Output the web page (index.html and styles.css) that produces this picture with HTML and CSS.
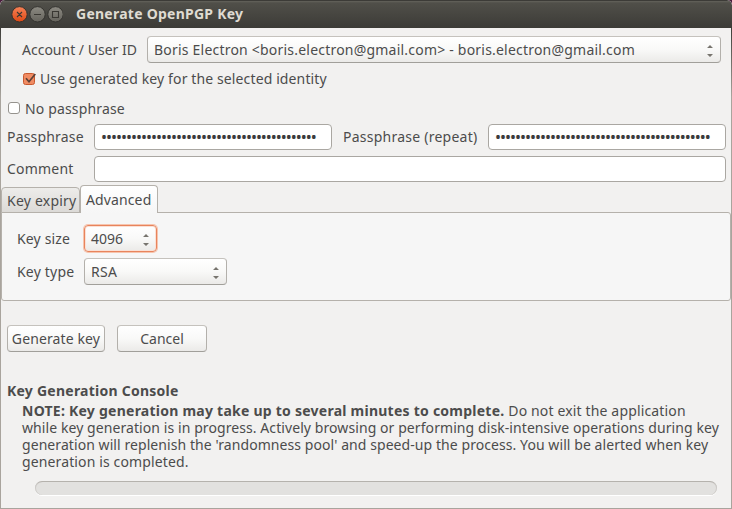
FILE: index.html
```
<!DOCTYPE html>
<html lang="en">
<head>
<meta charset="utf-8">
<title>Generate OpenPGP Key</title>
<link rel="stylesheet" href="styles.css">
</head>
<body>
<main class="window">
  <header class="titlebar">
    <svg class="controls" width="52" height="18" viewBox="0 0 52 18">
      <defs>
        <linearGradient id="close" x2="0" y2="1"><stop stop-color="#f68257"/><stop offset="1" stop-color="#dd4814"/></linearGradient>
        <linearGradient id="plain" x2="0" y2="1"><stop stop-color="#8c8a82"/><stop offset="1" stop-color="#65635c"/></linearGradient>
      </defs>
      <g stroke="#33322e">
        <circle cx="8.5" cy="9.3" r="7.7" fill="url(#close)"/>
        <circle cx="26.5" cy="9.3" r="7.7" fill="url(#plain)"/>
        <circle cx="44.5" cy="9.3" r="7.7" fill="url(#plain)"/>
      </g>
      <g fill="none" stroke="#3a3833" stroke-width="1.1">
        <path d="M6 7l5 5M11 7l-5 5M23 9.5h7M41.5 6.5h6v6h-6z"/>
      </g>
    </svg>
    <h1 class="title t-title">Generate OpenPGP Key</h1>
  </header>
  <section class="content">
    <div class="account">
      <span class="t-account">Account / User ID</span>
      <div class="select select-account"><span class="t-identity">Boris Electron &lt;boris.electron@gmail.com&gt; - boris.electron@gmail.com</span><svg class="arrows" width="8" height="13" viewBox="0 0 8 13"><path d="M1 4L4 1l3 3zM1 10h6l-3 3z"/></svg></div>
    </div>
    <div class="check check-identity">
      <svg width="14" height="14" viewBox="0 0 14 14"><rect x=".5" y="1.5" width="11" height="11" rx="2" fill="#f08b62" stroke="#c8592f"/><path d="M3 6.3l3 3.4 6.3-7.7" fill="none" stroke="#5c4036" stroke-width="1.7"/></svg>
      <span class="t-use">Use generated key for the selected identity</span>
    </div>
    <div class="check check-none">
      <i class="box"></i>
      <span class="t-nopass">No passphrase</span>
    </div>
    <div class="fields">
      <span class="t-pass">Passphrase</span>
      <div class="input">•••••••••••••••••••••••••••••••••••••••••••</div>
      <span class="t-repeat">Passphrase (repeat)</span>
      <div class="input">•••••••••••••••••••••••••••••••••••••••••••</div>
      <span class="t-comment">Comment</span>
      <div class="input input-comment"></div>
    </div>
    <nav class="tabs">
      <div class="tab"><span class="t-expiry">Key expiry</span></div>
      <div class="tab active"><span class="t-advanced">Advanced</span></div>
    </nav>
    <div class="panel">
      <span class="t-size">Key size</span>
      <div class="select select-size"><span class="t-4096">4096</span><svg class="arrows" width="8" height="13" viewBox="0 0 8 13"><path d="M1 4L4 1l3 3zM1 10h6l-3 3z"/></svg></div>
      <span class="t-type">Key type</span>
      <div class="select select-type"><span class="t-rsa">RSA</span><svg class="arrows" width="8" height="13" viewBox="0 0 8 13"><path d="M1 4L4 1l3 3zM1 10h6l-3 3z"/></svg></div>
    </div>
    <div class="actions">
      <div class="button button-generate"><span class="t-generate">Generate key</span></div>
      <div class="button button-cancel"><span class="t-cancel">Cancel</span></div>
    </div>
    <h2 class="console"><span class="t-console">Key Generation Console</span></h2>
    <p class="note"><b class="t-note1">NOTE: Key generation may take up to several minutes to complete.</b><span class="t-note2"> Do not exit the application</span><br>
    <span class="t-note3">while key generation is in progress. Actively browsing or performing disk-intensive operations during key</span><br>
    <span class="t-note4">generation will replenish the 'randomness pool' and speed-up the process. You will be alerted when key</span><br>
    <span class="t-note5">generation is completed.</span></p>
    <div class="progress"></div>
  </section>
</main>
</body>
</html>
```
FILE: styles.css
```
* { box-sizing: border-box; }
body { margin: 0; background: #4a1c3c; }
.window {
  width: 732px; height: 509px; display: flex; flex-direction: column;
  background: #f2f1f0; color: #4c4c4c; border-radius: 5px 5px 0 0; overflow: hidden;
  font: 14px/17px "Noto Sans", sans-serif; white-space: nowrap;
}
.titlebar {
  height: 28px; display: flex; align-items: center; padding: 0 11px; gap: 13px;
  background: linear-gradient(#3c3b37 0, #3c3b37 1px, #64635c 1px, #504f49 3px, #3c3b37);
  border-radius: 5px 5px 0 0; color: #dfdbd2;
}
.title { margin: 0 0 2px; font-size: 14px; line-height: 17px; font-weight: 700; }
.content {
  flex: 1; display: flex; flex-direction: column;
  border: solid; border-width: 0 1px 1px;
  border-image: linear-gradient(#3c3b37, #a9a49d 70px) 1;
}
.account { display: flex; align-items: center; margin: 8px 10px 0 21px; justify-content: space-between; }
.select {
  display: flex; align-items: center; justify-content: space-between;
  height: 27px; padding: 0 6px; border: 1px solid; border-color: #c5c2bd #b3b0ab #a19f9a;
  border-radius: 4px; background: linear-gradient(#fff, #f9f9f8 50%, #ebeae8);
}
.select-account { width: 574px; }
.select-size {
  width: 73px; height: 27px; border: 1px solid #e8845c; padding: 0 6px;
  box-shadow: 0 0 0 1px #f6c4ae, inset 0 0 0 1px #fae0d5;
}
.select-type { width: 143px; }
.arrows { fill: #77746e; flex: none; margin-top: 2px; }
.check { display: flex; align-items: center; height: 17px; }
.check-identity { margin: 7px 0 0 22px; gap: 3px; }
.check-none { margin: 13px 0 0 7px; gap: 5px; }
.box { width: 12px; height: 12px; border: 1px solid #96938e; border-radius: 3px; background: #fff; margin-top: -1px; }
.fields {
  display: grid; grid-template-columns: 87px 238px 156px 238px; grid-template-rows: 27px 27px;
  row-gap: 5px; margin: 6px 0 0 6px; align-items: center;
}
.t-repeat { padding-left: 11px; }
.input {
  height: 26px; border: 1px solid #aaa7a2; border-radius: 4px; background: #fff;
  color: #3c3c3c; padding: 0 6px; font-size: 16px; line-height: 24px; overflow: hidden; letter-spacing: -1.02px;
}
.input-comment { grid-column: 2 / 5; }
.tabs { display: flex; align-items: flex-end; height: 28px; margin-top: 3px; position: relative; }
.tab {
  width: 79px; height: 26px; padding: 4px 5px; border: 1px solid #b5b1ab; border-radius: 4px 4px 0 0;
  background: linear-gradient(#edecea, #dcdad7);
}
.active { width: 78px; height: 28px; background: linear-gradient(#fff, #f6f6f6); border-bottom: 0; padding: 5px; }
.panel {
  display: grid; grid-template-columns: 67px 1fr; grid-template-rows: 27px 27px; row-gap: 6px;
  align-items: center; height: 89px; margin-top: -1px; padding: 12px 15px; background: #f6f6f6;
  border: 1px solid #b5b1ab; border-radius: 0 3px 3px 3px;
}
.actions { display: flex; gap: 12px; margin: 24px 0 0 6px; }
.button {
  height: 27px; display: flex; align-items: center; justify-content: center;
  border: 1px solid; border-color: #c5c2bd #b3b0ab #a19f9a; border-radius: 4px;
  background: linear-gradient(#fff, #f9f9f8 50%, #ebeae8);
}
.button-generate { width: 98px; }
.button-cancel { width: 90px; }
.console { margin: 30px 0 0 6px; font-size: 14px; line-height: 17px; }
.note { margin: 3px 0 0 21px; }
.progress {
  width: 682px; height: 14px; margin: 11px 0 0 34px; border-radius: 7px;
  background: #e2e1df; border-top: 1px solid #b5b2ad;
  box-shadow: 0 1px #fff, inset 1px 0 #cecbc8, inset -1px 0 #cecbc8;
}
.t-title { letter-spacing: .25px; }
.t-identity { letter-spacing: .21px; }
.t-use { letter-spacing: .12px; }
.t-nopass { letter-spacing: .15px; }
.t-pass { letter-spacing: .18px; }
.t-repeat { letter-spacing: .24px; }
.t-comment { letter-spacing: .2px; }
.t-expiry { letter-spacing: .22px; }
.t-advanced { letter-spacing: .12px; }
.t-size { letter-spacing: .15px; }
.t-type { letter-spacing: .2px; }
.t-rsa { letter-spacing: .3px; }
.t-generate { letter-spacing: .12px; }
.t-console { letter-spacing: .24px; }
.t-note1 { letter-spacing: .245px; }
.t-note2 { letter-spacing: .15px; }
.t-note3 { letter-spacing: .08px; }
.t-note4 { letter-spacing: .07px; }
.t-note5 { letter-spacing: .13px; }
```
